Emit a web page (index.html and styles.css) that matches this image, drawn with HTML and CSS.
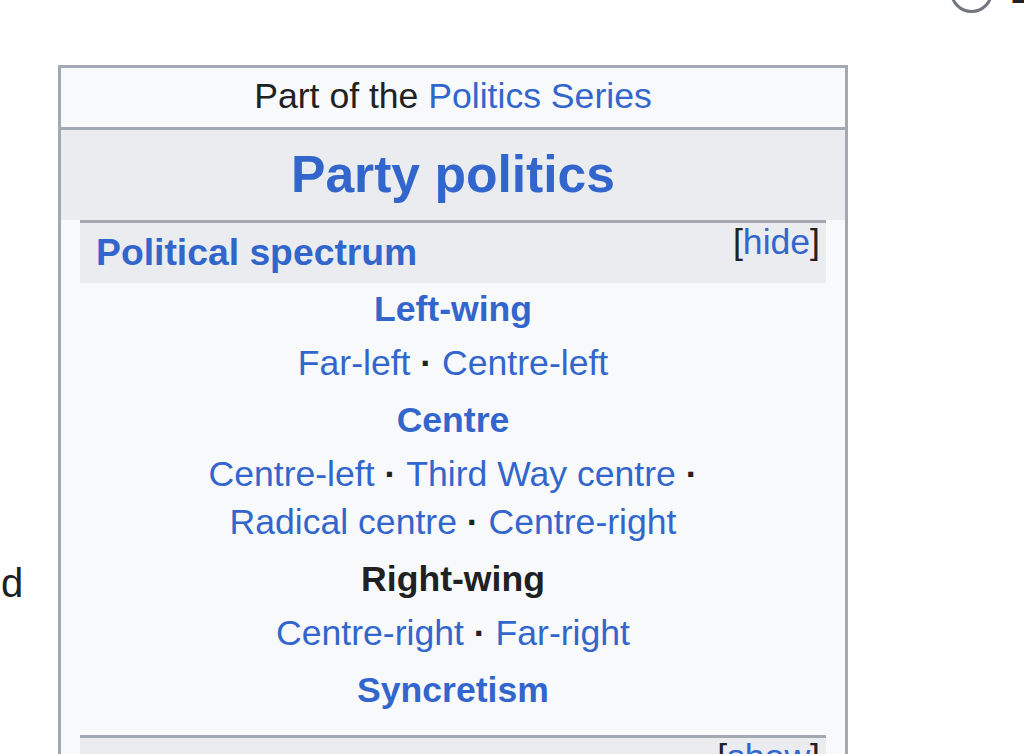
FILE: index.html
```html
<!DOCTYPE html>
<html lang="en">
<head>
  <meta charset="UTF-8" />
  <meta name="viewport" content="width=device-width, initial-scale=1.0"/>
  <title>Party politics</title>
  <link rel="stylesheet" href="styles.css">
</head>
<body>
  <div class="corner-icons">
    <span class="ring"></span>
    <span class="bar"></span>
  </div>

  <div class="page">
    <div class="article-text">
      <p class="tail">d</p>
    </div>

    <div class="sidebar">
      <div class="sidebar-above">Part of the <a href="#">Politics Series</a></div>
      <div class="sidebar-title"><a href="#">Party politics</a></div>

      <div class="sidebar-section">
        <div class="section-head">
          <span class="toggle">[<a href="#">hide</a>]</span>
          <a href="#">Political spectrum</a>
        </div>
        <div class="section-body">
          <div class="group-title first"><a href="#">Left-wing</a></div>
          <ul class="hlist">
            <li><a href="#">Far-left</a></li>
            <li><a href="#">Centre-left</a></li>
          </ul>
          <div class="group-title"><a href="#">Centre</a></div>
          <ul class="hlist">
            <li><a href="#">Centre-left</a></li>
            <li><a href="#">Third Way centre</a></li>
            <li><a href="#">Radical centre</a></li>
            <li><a href="#">Centre-right</a></li>
          </ul>
          <div class="group-title self">Right-wing</div>
          <ul class="hlist">
            <li><a href="#">Centre-right</a></li>
            <li><a href="#">Far-right</a></li>
          </ul>
          <div class="group-title"><a href="#">Syncretism</a></div>
        </div>
      </div>

      <div class="sidebar-section">
        <div class="section-head">
          <span class="toggle">[<a href="#">show</a>]</span>
        </div>
      </div>
    </div>
  </div>
</body>
</html>
```

FILE: styles.css
```css
html, body { margin: 0; overflow: hidden; }
body { font-family: "Liberation Sans", Arial, sans-serif; color: #202122; background: #fff; }
a { color: #3366cc; text-decoration: none; }

.corner-icons span { position: absolute; display: block; }
.ring { left: 950px; top: -30px; width: 37px; height: 37px; border: 3px solid #72777d; border-radius: 50%; }
.bar { left: 1012px; top: 0; width: 12px; height: 3px; background: #202122; border-left: 1px solid #e0902c; }

.page { display: flex; align-items: flex-start; padding-top: 65px; }
.article-text { width: 58px; flex-shrink: 0; }
.tail { margin: 494px 0 0 1px; font-size: 40px; line-height: 48px; }

.sidebar { width: 784px; flex-shrink: 0; border: 3px solid #a2a9b1; background: #f8f9fa; font-size: 35.6px; line-height: 48px; text-align: center; }
.sidebar-above { padding: 4px 0 7px; }
.sidebar-title { border-top: 3px solid #a2a9b1; background: #eaecf0; padding: 15px 0 17px; font-size: 51.6px; line-height: 58px; font-weight: bold; }

.sidebar-section { margin: 0 19px; border-top: 3px solid #a2a9b1; }
.section-head { background: #eaecf0; text-align: left; padding: 0 0 0 16px; font-size: 37.3px; line-height: 1.6em; font-weight: bold; min-height: 1.6em; }
.toggle { float: right; margin-right: 6px; font-size: 35.6px; line-height: 38px; font-weight: normal; }

.section-body { padding: 2px 4px 21px; }
.group-title { margin-top: 9px; font-weight: bold; }
.group-title.first { margin-top: 0; }
.group-title.self { color: #202122; }

.hlist { list-style: none; margin: 6px 0 0; padding: 0; }
.hlist li { display: inline; white-space: nowrap; }
.hlist li::after { content: "\a0·"; font-weight: bold; color: #202122; }
.hlist li:last-child::after { content: none; }
```
